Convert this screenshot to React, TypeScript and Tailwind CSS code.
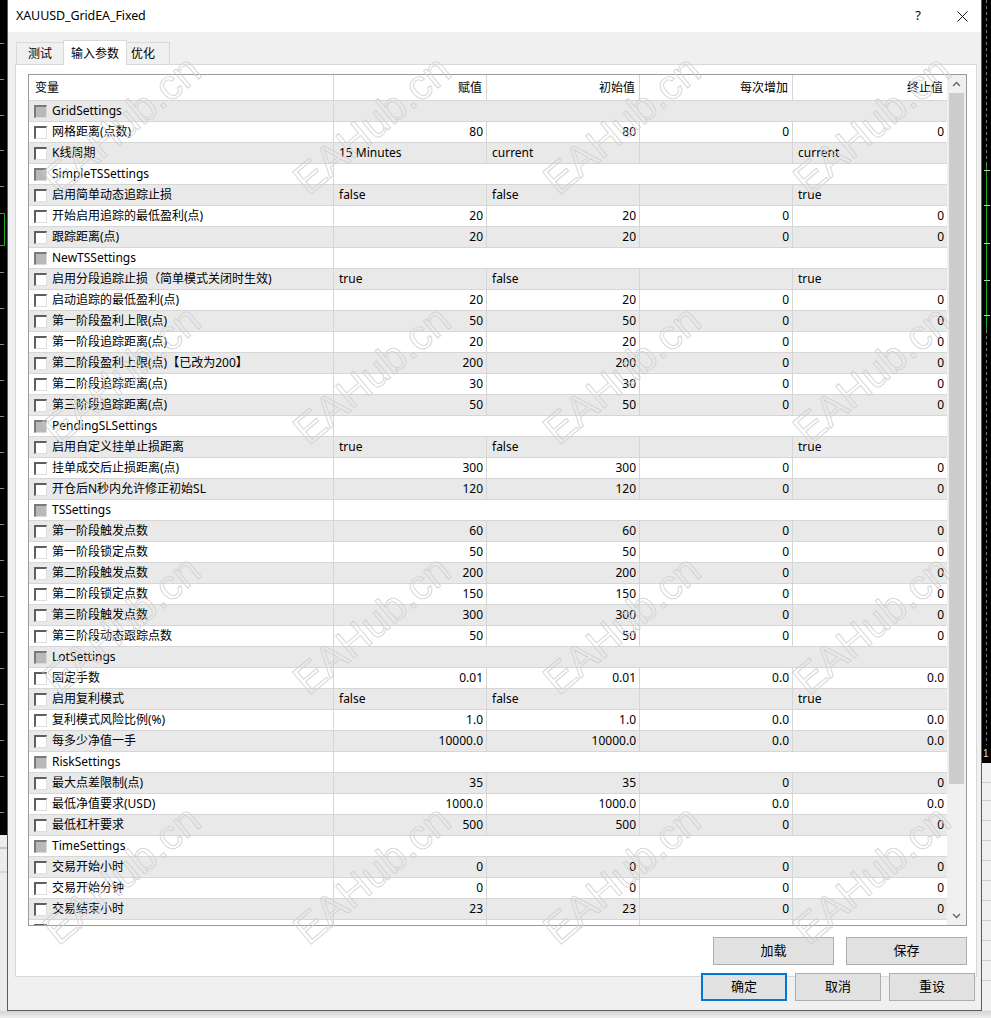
import React from 'react';

type Row = { g?: string; n?: string; v?: string[]; l?: boolean };

const rows: Row[] = [
  { g: 'GridSettings' },
  { n: '网格距离(点数)', v: ['80', '80', '0', '0'] },
  { n: 'K线周期', v: ['15 Minutes', 'current', '', 'current'], l: true },
  { g: 'SimpleTSSettings' },
  { n: '启用简单动态追踪止损', v: ['false', 'false', '', 'true'], l: true },
  { n: '开始启用追踪的最低盈利(点)', v: ['20', '20', '0', '0'] },
  { n: '跟踪距离(点)', v: ['20', '20', '0', '0'] },
  { g: 'NewTSSettings' },
  { n: '启用分段追踪止损（简单模式关闭时生效)', v: ['true', 'false', '', 'true'], l: true },
  { n: '启动追踪的最低盈利(点)', v: ['20', '20', '0', '0'] },
  { n: '第一阶段盈利上限(点)', v: ['50', '50', '0', '0'] },
  { n: '第一阶段追踪距离(点)', v: ['20', '20', '0', '0'] },
  { n: '第二阶段盈利上限(点)【已改为200】', v: ['200', '200', '0', '0'] },
  { n: '第二阶段追踪距离(点)', v: ['30', '30', '0', '0'] },
  { n: '第三阶段追踪距离(点)', v: ['50', '50', '0', '0'] },
  { g: 'PendingSLSettings' },
  { n: '启用自定义挂单止损距离', v: ['true', 'false', '', 'true'], l: true },
  { n: '挂单成交后止损距离(点)', v: ['300', '300', '0', '0'] },
  { n: '开仓后N秒内允许修正初始SL', v: ['120', '120', '0', '0'] },
  { g: 'TSSettings' },
  { n: '第一阶段触发点数', v: ['60', '60', '0', '0'] },
  { n: '第一阶段锁定点数', v: ['50', '50', '0', '0'] },
  { n: '第二阶段触发点数', v: ['200', '200', '0', '0'] },
  { n: '第二阶段锁定点数', v: ['150', '150', '0', '0'] },
  { n: '第三阶段触发点数', v: ['300', '300', '0', '0'] },
  { n: '第三阶段动态跟踪点数', v: ['50', '50', '0', '0'] },
  { g: 'LotSettings' },
  { n: '固定手数', v: ['0.01', '0.01', '0.0', '0.0'] },
  { n: '启用复利模式', v: ['false', 'false', '', 'true'], l: true },
  { n: '复利模式风险比例(%)', v: ['1.0', '1.0', '0.0', '0.0'] },
  { n: '每多少净值一手', v: ['10000.0', '10000.0', '0.0', '0.0'] },
  { g: 'RiskSettings' },
  { n: '最大点差限制(点)', v: ['35', '35', '0', '0'] },
  { n: '最低净值要求(USD)', v: ['1000.0', '1000.0', '0.0', '0.0'] },
  { n: '最低杠杆要求', v: ['500', '500', '0', '0'] },
  { g: 'TimeSettings' },
  { n: '交易开始小时', v: ['0', '0', '0', '0'] },
  { n: '交易开始分钟', v: ['0', '0', '0', '0'] },
  { n: '交易结束小时', v: ['23', '23', '0', '0'] },
  { n: '', v: ['', '', '', ''] },
];

const colW = ['w-[153px]', 'w-[153px]', 'w-[153px]', 'w-[154px]'];

function Check({ group }: { group?: boolean }) {
  return (
    <span
      className={
        'shrink-0 w-[13px] h-[13px] border-t-2 border-l-2 border-r border-b ' +
        (group
          ? 'bg-[#b9b9b9] border-t-[#7a7a7a] border-l-[#7a7a7a] border-r-[#d9d9d9] border-b-[#d9d9d9]'
          : 'bg-white border-t-[#5f5f5f] border-l-[#5f5f5f] border-r-[#dedede] border-b-[#dedede]')
      }
    />
  );
}

function DataRow({ r, i }: { r: Row; i: number }) {
  const bg = i % 2 === 0 ? 'bg-[#e9e9e9]' : 'bg-white';
  return (
    <div className={`flex h-[21px] shrink-0 border-b border-[#d6d6d6] ${bg}`}>
      <div className="w-[305px] shrink-0 flex items-center border-r border-[#d6d6d6] pl-[5px]">
        <Check group={!!r.g} />
        {(r.g ?? r.n) ? <span className="ml-[5px] whitespace-nowrap">{r.g ?? r.n}</span> : null}
      </div>
      {r.g ? (
        <div className="flex-1" />
      ) : (
        r.v!.map((v, k) => (
          <div
            key={k}
            className={`${colW[k]} shrink-0 flex items-center whitespace-nowrap ${k < 3 ? 'border-r border-[#d6d6d6]' : ''} ${
              r.l ? 'justify-start pl-[5px]' : 'justify-end pr-[3px]'
            }`}
          >
            {v}
          </div>
        ))
      )}
    </div>
  );
}

function Chevron({ up }: { up?: boolean }) {
  return (
    <svg width="9" height="6" viewBox="0 0 9 6">
      <polyline
        points={up ? '1,5 4.5,1.5 8,5' : '1,1 4.5,4.5 8,1'}
        fill="none"
        stroke="#606060"
        strokeWidth="1.3"
      />
    </svg>
  );
}

const wm = [
  'left-[122px] top-[125px]', 'left-[372px] top-[125px]', 'left-[622px] top-[125px]', 'left-[872px] top-[125px]',
  'left-[122px] top-[375px]', 'left-[372px] top-[375px]', 'left-[622px] top-[375px]', 'left-[872px] top-[375px]',
  'left-[122px] top-[625px]', 'left-[372px] top-[625px]', 'left-[622px] top-[625px]', 'left-[872px] top-[625px]',
  'left-[122px] top-[875px]', 'left-[372px] top-[875px]', 'left-[622px] top-[875px]', 'left-[872px] top-[875px]',
];

function LeftStrip() {
  const ticks = [43, 79, 115, 150, 186, 272, 308, 344, 380, 416, 452, 488, 524, 560, 596, 632, 668, 704, 740, 776, 812];
  return (
    <svg width="7" height="1010" className="shrink-0 block">
      <rect x="0" y="0" width="7" height="835" fill="#000" />
      <rect x="0" y="835" width="7" height="175" fill="#ececec" />
      <line x1="0" y1="848" x2="7" y2="848" stroke="#9a9a9a" />
      <line x1="0" y1="872" x2="7" y2="872" stroke="#bdbdbd" />
      {ticks.map((t) => (
        <line key={t} x1="0" y1={t + 0.5} x2="4" y2={t + 0.5} stroke="#8a8a8a" />
      ))}
      <polyline points="0,213.5 4.5,213.5 4.5,245.5 0,245.5" fill="none" stroke="#22b022" />
    </svg>
  );
}

function RightStrip() {
  return (
    <svg width="9" height="1010" className="shrink-0 block">
      <rect x="0" y="0" width="9" height="763" fill="#000" />
      <line x1="4.5" y1="0" x2="4.5" y2="745" stroke="#7a7a7a" strokeDasharray="3 3" />
      <line x1="4.5" y1="165" x2="4.5" y2="330" stroke="#1fa81f" />
      {[170, 205, 243, 280, 315].map((t) => (
        <line key={t} x1="2" y1={t + 0.5} x2="8" y2={t + 0.5} stroke="#c8c8c8" />
      ))}
      <text x="1" y="757" fill="#ddd" fontSize="10" fontFamily="Liberation Sans">1</text>
      <rect x="0" y="763" width="9" height="247" fill="#f0f0f0" />
      {[782, 800, 820, 840, 860, 880, 900, 920, 940, 960, 980].map((t) => (
        <line key={t} x1="0" y1={t + 0.5} x2="9" y2={t + 0.5} stroke="#cfcfcf" />
      ))}
    </svg>
  );
}

export default function App() {
  return (
    <div className="relative w-[991px] h-[1018px] overflow-hidden bg-[#e9e9e9] text-[12px] text-black font-['Noto_Sans','Noto_Sans_CJK_SC',sans-serif]">
      <div className="flex h-[1011px]">
        <LeftStrip />
        <div className="w-[975px] shrink-0 flex flex-col bg-[#f0f0f0] border-l border-r border-b border-[#5c5c5c]">
          {/* Title bar */}
          <div className="h-[32px] shrink-0 bg-white flex items-center pl-[8px] pr-[13px]">
            <span className="text-[12.5px] tracking-[-0.1px]">XAUUSD_GridEA_Fixed</span>
            <span className="ml-auto text-[13px] mr-[36px]">?</span>
            <svg width="11" height="11" viewBox="0 0 11 11">
              <line x1="0.5" y1="0.5" x2="10.5" y2="10.5" stroke="#111" strokeWidth="1" />
              <line x1="10.5" y1="0.5" x2="0.5" y2="10.5" stroke="#111" strokeWidth="1" />
            </svg>
          </div>

          {/* Tabs */}
          <div className="h-[32px] shrink-0 flex items-end pl-[8px] relative z-10">
            <div className="w-[47px] h-[22px] flex items-center justify-center border-t border-l border-[#d9d9d9] bg-[#f0f0f0]">
              测试
            </div>
            <div className="w-[64px] h-[25px] -mb-[1px] flex items-start pt-[4px] justify-center border-t border-l border-r border-[#d9d9d9] bg-white">
              输入参数
            </div>
            <div className="w-[43px] h-[22px] flex items-center pl-[4px] border-t border-r border-[#d9d9d9] bg-[#f0f0f0]">
              优化
            </div>
          </div>

          {/* Panel */}
          <div className="ml-[7px] mr-[4px] h-[913px] shrink-0 border border-[#d9d9d9] bg-white pt-[9px] pl-[12px] pr-[9px] pb-[11px] flex flex-col">
            <div className="h-[852px] shrink-0 border border-[#9b9b9b] flex overflow-hidden">
              <div className="w-[918px] shrink-0 flex flex-col overflow-hidden">
                <div className="flex h-[26px] shrink-0 border-b border-[#d6d6d6] bg-white">
                  <div className="w-[305px] shrink-0 flex items-center pl-[6px] border-r border-[#d6d6d6]">变量</div>
                  <div className="w-[153px] shrink-0 flex items-center justify-end pr-[4px] border-r border-[#d6d6d6]">赋值</div>
                  <div className="w-[153px] shrink-0 flex items-center justify-end pr-[4px] border-r border-[#d6d6d6]">初始值</div>
                  <div className="w-[153px] shrink-0 flex items-center justify-end pr-[4px] border-r border-[#d6d6d6]">每次增加</div>
                  <div className="w-[154px] shrink-0 flex items-center justify-end pr-[4px]">终止值</div>
                </div>
                {rows.map((r, i) => (
                  <DataRow key={i} r={r} i={i} />
                ))}
              </div>
              <div className="w-[19px] shrink-0 bg-[#f0f0f0] flex flex-col px-[2px]">
                <div className="h-[18px] shrink-0 flex items-center justify-center">
                  <Chevron up />
                </div>
                <div className="h-[691px] shrink-0 bg-[#cdcdcd]" />
                <div className="flex-1" />
                <div className="h-[18px] shrink-0 flex items-center justify-center">
                  <Chevron />
                </div>
              </div>
            </div>
            <div className="mt-[11px] flex justify-end gap-[12px]">
              <button className="w-[121px] h-[28px] bg-[#e1e1e1] border border-[#adadad] text-[13px]">加载</button>
              <button className="w-[121px] h-[28px] bg-[#e1e1e1] border border-[#adadad] text-[13px]">保存</button>
            </div>
          </div>

          {/* Bottom buttons */}
          <div className="-mt-[4px] relative z-10 flex justify-end gap-[8px] pr-[6px]">
            <button className="w-[86px] h-[28px] bg-[#e1e1e1] border-2 border-[#0078d7] text-[13px]">确定</button>
            <button className="w-[86px] h-[28px] bg-[#e1e1e1] border border-[#adadad] text-[13px]">取消</button>
            <button className="w-[86px] h-[28px] bg-[#e1e1e1] border border-[#adadad] text-[13px]">重设</button>
          </div>
        </div>
        <RightStrip />
      </div>
      <div className="h-[7px] bg-gradient-to-b from-[#d4d4d4] to-[#ededed]" />

      {/* Watermarks */}
      <div className="pointer-events-none absolute inset-0" aria-hidden="true">
        {wm.map((p, i) => (
          <span
            key={i}
            className={`absolute ${p} -translate-x-1/2 -translate-y-1/2 rotate-[-40deg] whitespace-nowrap text-[42px] leading-none text-transparent [-webkit-text-stroke:0.8px_#d0d0d0] font-['Liberation_Sans',sans-serif]`}
          >
            EAHub.cn
          </span>
        ))}
      </div>
    </div>
  );
}
